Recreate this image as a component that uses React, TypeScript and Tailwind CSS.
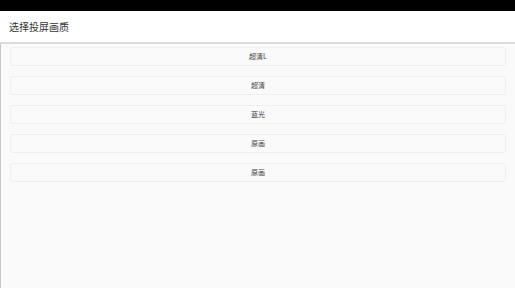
import React from "react";

const options = ["超清L", "超清", "蓝光", "原画", "原画"];

const App: React.FC = () => {
  return (
    <div
      className="w-[515px] h-[288px] flex flex-col bg-[#fafafa] overflow-hidden"
      style={{ fontFamily: '"Noto Sans CJK SC", "Noto Sans", sans-serif' }}
    >
      <div className="h-[11px] bg-black shrink-0" />
      <div className="h-[31px] bg-white flex items-center px-[9px] shrink-0">
        <span className="text-[10px] text-[#333]">选择投屏画质</span>
      </div>
      <div className="h-[2px] bg-[#dcdcdc] shrink-0" />
      <div className="flex-1 flex flex-col gap-[10px] pl-[9px] pr-[9px] pt-[3px] border-l border-[#c8c8c8]">
        {options.map((label, i) => (
          <div
            key={i}
            className="h-[19px] flex items-center justify-center rounded-[3px] border border-[#efefef] bg-[#fafafa] text-[7px] text-[#444]"
          >
            {label}
          </div>
        ))}
      </div>
    </div>
  );
};

export default App;
